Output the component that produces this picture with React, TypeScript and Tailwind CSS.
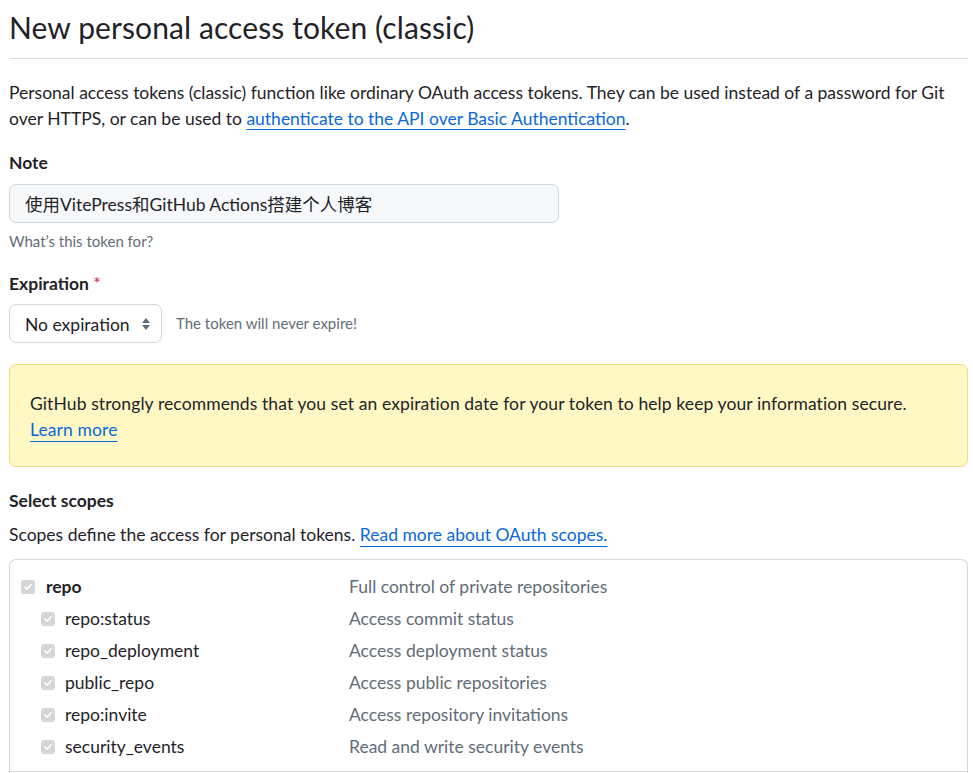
import React from 'react';

const font = { fontFamily: 'Lato, "Noto Sans CJK SC", sans-serif' };

const Check = () => (
  <span className="w-[14px] h-[14px] rounded-[3px] bg-[#d6d6d6] flex items-center justify-center shrink-0">
    <svg width="10" height="10" viewBox="0 0 10 10">
      <path d="M2 5.2 L4.1 7.2 L8 2.8" stroke="#fff" strokeWidth="1.6" fill="none" strokeLinecap="round" strokeLinejoin="round" />
    </svg>
  </span>
);

const scopes = [
  { name: 'repo:status', desc: 'Access commit status' },
  { name: 'repo_deployment', desc: 'Access deployment status' },
  { name: 'public_repo', desc: 'Access public repositories' },
  { name: 'repo:invite', desc: 'Access repository invitations' },
  { name: 'security_events', desc: 'Read and write security events' },
];

const App: React.FC = () => (
  <div className="bg-white min-h-screen text-[#1f2328]" style={font}>
    <div className="ml-[9px] w-[959px]">
      {/* Header */}
      <div className="pt-[8px] pb-[12px] border-b border-[#d8dee4]">
        <h1 className="text-[30px] leading-[38px] font-normal tracking-[0.1px]">New personal access token (classic)</h1>
      </div>

      <div className="mt-[21px] text-[17.5px] leading-[26px]">
        <div>Personal access tokens (classic) function like ordinary OAuth access tokens. They can be used instead of a password for Git</div>
        <div>
          over HTTPS, or can be used to{' '}
          <a className="text-[#0969da] underline underline-offset-[4px]">authenticate to the API over Basic Authentication</a>.
        </div>
      </div>

      {/* Note */}
      <div className="mt-[18px] text-[17.5px] leading-[26px] font-bold">Note</div>
      <div className="mt-[8px] w-[550px] h-[39px] rounded-[7px] border border-[#d0d7de] bg-[#f6f8fa] flex items-center px-[15px] pt-[3px] text-[17.5px]">
        使用VitePress和GitHub Actions搭建个人博客
      </div>
      <div className="mt-[8px] text-[15px] leading-[20px] text-[#656d76]">What’s this token for?</div>

      {/* Expiration */}
      <div className="mt-[20px] text-[17.5px] leading-[26px] font-bold">
        Expiration <span className="text-[#cf222e] font-normal">*</span>
      </div>
      <div className="mt-[7px] flex items-center gap-[14px]">
        <div className="w-[153px] h-[39px] rounded-[7px] border border-[#d0d7de] bg-white flex items-center justify-between pl-[15px] pr-[10px] text-[17.5px]">
          <span className="pt-[3px]">No expiration</span>
          <svg width="10" height="14" viewBox="0 0 10 14">
            <path d="M5 1 L9 6 H1 Z" fill="#636c76" />
            <path d="M5 13 L9 8 H1 Z" fill="#636c76" />
          </svg>
        </div>
        <span className="text-[15px] text-[#656d76]">The token will never expire!</span>
      </div>

      {/* Warning */}
      <div className="mt-[21px] h-[103px] rounded-[7px] border border-[#eedc82] bg-[#fff8c5] pt-[26px] px-[20px] text-[17.5px] leading-[26px] tracking-[0.1px]">
        GitHub strongly recommends that you set an expiration date for your token to help keep your information secure.
        <br />
        <a className="text-[#0969da] underline underline-offset-[5px]">Learn more</a>
      </div>

      {/* Scopes */}
      <div className="mt-[21px] text-[17.5px] leading-[26px] font-bold">Select scopes</div>
      <p className="mt-[8px] text-[17.5px] leading-[26px]">
        Scopes define the access for personal tokens.{' '}
        <a className="text-[#0969da] underline underline-offset-[5px]">Read more about OAuth scopes.</a>
      </p>

      <div className="mt-[11px] rounded-t-[7px] border border-b-0 border-[#d0d7de] h-[240px]">
        <div className="pt-[11px] pb-[8px] text-[17.5px]">
          <div className="h-[32px] flex items-center pl-[11px]">
            <div className="w-[328px] flex items-center gap-[11px]">
              <Check />
              <span className="font-bold">repo</span>
            </div>
            <span className="text-[#636c76]">Full control of private repositories</span>
          </div>
          {scopes.map((s) => (
            <div key={s.name} className="h-[32px] flex items-center pl-[31px]">
              <div className="w-[308px] flex items-center gap-[10px]">
                <Check />
                <span>{s.name}</span>
              </div>
              <span className="text-[#636c76]">{s.desc}</span>
            </div>
          ))}
        </div>
        <div className="border-t border-[#d8dee4]" />
      </div>
    </div>
  </div>
);

export default App;
